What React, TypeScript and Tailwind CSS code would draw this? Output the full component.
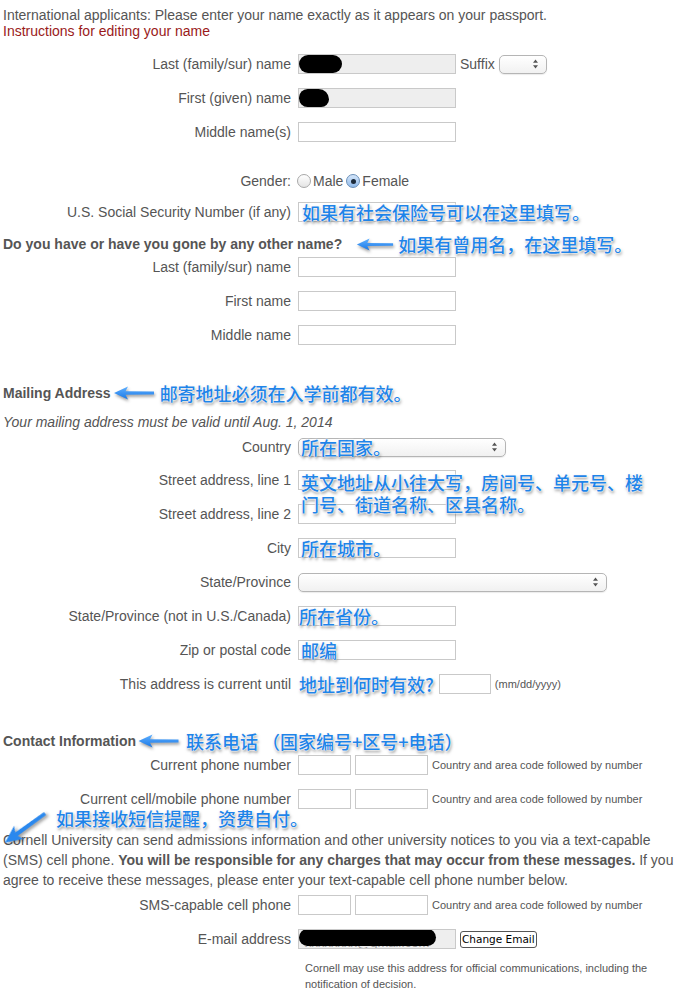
import React from 'react'
import { clsx } from 'clsx'

const glow =
  "font-['Noto_Sans_CJK_SC','Noto_Sans',sans-serif] font-medium text-[18px] leading-[22px] text-[#1f84e8] whitespace-nowrap [text-shadow:0_0_2px_#fff,0_0_2px_#fff,0_0_1px_#fff,1px_2px_3px_rgba(0,0,0,0.5)]"

function Arrow({ className }: { className?: string }) {
  return (
    <svg
      viewBox="0 0 42 16"
      className={clsx('[filter:drop-shadow(1px_2px_1.5px_rgba(0,0,0,0.4))]', className)}
    >
      <defs>
        <linearGradient id="ag" x1="0" y1="0" x2="0" y2="1">
          <stop offset="0" stopColor="#5fb0ff" />
          <stop offset="1" stopColor="#1a78e6" />
        </linearGradient>
      </defs>
      <path d="M1 8 L15 1.5 L12.5 6.3 L41 6.6 L41 9.4 L12.5 9.7 L15 14.5 Z" fill="url(#ag)" />
    </svg>
  )
}

function Row({ label, className, children }: { label: React.ReactNode; className?: string; children?: React.ReactNode }) {
  return (
    <div className={clsx('flex items-center h-[20px]', className)}>
      <div className="w-[288px] shrink-0 text-right whitespace-nowrap">{label}</div>
      <div className="ml-[7px] flex items-center">{children}</div>
    </div>
  )
}

function TextBox({ className, children }: { className?: string; children?: React.ReactNode }) {
  return (
    <div className={clsx('relative h-[20px] border border-[#c9c9c9] bg-white', className ?? 'w-[158px]')}>
      {children}
    </div>
  )
}

function Updown() {
  return (
    <svg width="7" height="11" viewBox="0 0 7 11" className="absolute right-[7px] top-1/2 -translate-y-1/2">
      <path d="M3.5 1 L6 4.2 L1 4.2 Z M3.5 10 L6 6.8 L1 6.8 Z" fill="#555" />
    </svg>
  )
}

function SelectBox({ className, children }: { className: string; children?: React.ReactNode }) {
  return (
    <div
      className={clsx(
        'relative h-[19px] rounded-[5px] border border-[#b5b5b5] bg-gradient-to-b from-white to-[#f1f1f1] shadow-[0_1px_1px_rgba(0,0,0,0.08)]',
        className
      )}
    >
      <Updown />
      {children}
    </div>
  )
}

function Radio({ checked }: { checked?: boolean }) {
  return checked ? (
    <div className="w-[14px] h-[14px] rounded-full border border-[#6a8fb8] bg-gradient-to-b from-[#d6e7fa] to-[#8fb9ea] flex items-center justify-center">
      <div className="w-[5px] h-[5px] rounded-full bg-[#1c2a3a]" />
    </div>
  ) : (
    <div className="w-[14px] h-[14px] rounded-full border border-[#a8a8a8] bg-gradient-to-b from-white to-[#e4e4e4]" />
  )
}

function Phone() {
  return (
    <>
      <TextBox className="w-[53px]" />
      <TextBox className="ml-[4px] w-[73px]" />
      <span className="ml-[4px] text-[11px] text-[#555] whitespace-nowrap">Country and area code followed by number</span>
    </>
  )
}

export default function App() {
  return (
    <div className="w-[675px] h-[994px] overflow-hidden bg-white pl-[3px] pt-[7px] font-['Liberation_Sans',Arial,sans-serif] text-[14px] text-[#555]">
      <div className="leading-4">International applicants: Please enter your name exactly as it appears on your passport.</div>
      <div className="leading-4 text-[#9a1a1a]">Instructions for editing your name</div>

      <Row label="Last (family/sur) name" className="mt-[15px]">
        <TextBox className="w-[158px] !bg-[#eeeeee]">
          <div className="absolute left-0 top-0 w-[43px] h-[18px] rounded-full bg-black" />
        </TextBox>
        <span className="ml-[4px]">Suffix</span>
        <SelectBox className="ml-[4px] w-[48px]" />
      </Row>
      <Row label="First (given) name" className="mt-[14px]">
        <TextBox className="w-[158px] !bg-[#eeeeee]">
          <div className="absolute left-0 top-0 w-[30px] h-[18px] rounded-[10px_12px_9px_10px] bg-black" />
        </TextBox>
      </Row>
      <Row label="Middle name(s)" className="mt-[14px]">
        <TextBox />
      </Row>

      <Row label="Gender:" className="mt-[29px]">
        <div className="-ml-[1px] flex items-center">
          <Radio />
          <span className="ml-[2px]">Male</span>
          <div className="ml-[3px]">
            <Radio checked />
          </div>
          <span className="ml-[2px]">Female</span>
        </div>
      </Row>
      <Row label="U.S. Social Security Number (if any)" className="mt-[11px]">
        <TextBox>
          <span className={clsx(glow, 'absolute left-[3px] top-1/2 -translate-y-1/2')}>如果有社会保险号可以在这里填写。</span>
        </TextBox>
      </Row>

      <div className="mt-[12px] h-[20px] flex items-center">
        <span className="font-bold whitespace-nowrap">Do you have or have you gone by any other name?</span>
        <Arrow className="ml-[14px] w-[38px] h-[15px]" />
        <span className={clsx(glow, 'ml-[4px]')}>如果有曾用名，在这里填写。</span>
      </div>
      <Row label="Last (family/sur) name" className="mt-[3px]">
        <TextBox />
      </Row>
      <Row label="First name" className="mt-[14px]">
        <TextBox />
      </Row>
      <Row label="Middle name" className="mt-[14px]">
        <TextBox />
      </Row>

      <div className="mt-[38px] h-[20px] flex items-center">
        <span className="font-bold whitespace-nowrap">Mailing Address</span>
        <Arrow className="ml-[1px] w-[44px] h-[16px]" />
        <span className={clsx(glow, 'ml-[4px]')}>邮寄地址必须在入学前都有效。</span>
      </div>
      <div className="mt-[9px] h-[20px] leading-5 italic">Your mailing address must be valid until Aug. 1, 2014</div>
      <Row label="Country" className="mt-[5px]">
        <SelectBox className="w-[208px]">
          <span className={clsx(glow, 'absolute left-[2px] top-1/2 -translate-y-1/2')}>所在国家。</span>
        </SelectBox>
      </Row>
      <Row label="Street address, line 1" className="mt-[13px]">
        <TextBox>
          <span className={clsx(glow, 'absolute left-[2px] top-0 z-10')}>
            英文地址从小往大写，房间号、单元号、楼
            <br />
            门号、街道名称、区县名称。
          </span>
        </TextBox>
      </Row>
      <Row label="Street address, line 2" className="mt-[14px]">
        <TextBox />
      </Row>
      <Row label="City" className="mt-[14px]">
        <TextBox>
          <span className={clsx(glow, 'absolute left-[2px] top-1/2 -translate-y-1/2')}>所在城市。</span>
        </TextBox>
      </Row>
      <Row label="State/Province" className="mt-[14px]">
        <SelectBox className="w-[309px]" />
      </Row>
      <Row label="State/Province (not in U.S./Canada)" className="mt-[14px]">
        <TextBox>
          <span className={clsx(glow, 'absolute left-0 top-1/2 -translate-y-1/2')}>所在省份。</span>
        </TextBox>
      </Row>
      <Row label="Zip or postal code" className="mt-[14px]">
        <TextBox>
          <span className={clsx(glow, 'absolute left-[2px] top-1/2 -translate-y-1/2')}>邮编</span>
        </TextBox>
      </Row>
      <Row label="This address is current until" className="mt-[14px]">
        <span className={clsx(glow, 'ml-[1px]')}>地址到何时有效?</span>
        <TextBox className="ml-[5px] w-[52px]" />
        <span className="ml-[4px] text-[11px] whitespace-nowrap">(mm/dd/yyyy)</span>
      </Row>

      <div className="mt-[37px] h-[20px] flex items-center">
        <span className="font-bold whitespace-nowrap">Contact Information</span>
        <Arrow className="ml-[1px] w-[43px] h-[16px]" />
        <span className={clsx(glow, 'ml-[6px]')}>联系电话 （国家编号+区号+电话）</span>
      </div>
      <Row label="Current phone number" className="mt-[4px]">
        <Phone />
      </Row>
      <Row label="Current cell/mobile phone number" className="mt-[14px]">
        <Phone />
      </Row>

      <div className="relative mt-[21px] leading-5 whitespace-nowrap">
        <svg viewBox="0 0 42 16" className="absolute left-[-4px] top-[-26px] w-[52px] h-[34px] overflow-visible">
          <g transform="translate(4 26) rotate(-36) translate(0 -8)">
            <path
              d="M1 8 L15 1.5 L12.5 6.3 L41 6.6 L41 9.4 L12.5 9.7 L15 14.5 Z"
              fill="#2a88ee"
              className="[filter:drop-shadow(1px_2px_1.5px_rgba(0,0,0,0.4))]"
            />
          </g>
        </svg>
        <span className={clsx(glow, 'absolute left-[53px] top-[-23px]')}>如果接收短信提醒，资费自付。</span>
        Cornell University can send admissions information and other university notices to you via a text-capable
        <br />
        (SMS) cell phone. <b>You will be responsible for any charges that may occur from these messages.</b> If you
        <br />
        agree to receive these messages, please enter your text-capable cell phone number below.
      </div>
      <Row label="SMS-capable cell phone" className="mt-[5px]">
        <Phone />
      </Row>
      <Row label="E-mail address" className="mt-[14px]">
        <TextBox className="w-[158px] !bg-[#eeeeee] overflow-hidden">
          <span className="absolute left-[6px] top-[3px] text-[13px] text-[#999]">xxxxxxxx@gmail.com</span>
          <div className="absolute left-0 top-[-1px] w-[137px] h-[17px] rounded-full bg-black" />
        </TextBox>
        <button className="ml-[4px] h-[17px] px-[1px] rounded-[3px] border border-[#555] bg-white font-['DejaVu_Sans',sans-serif] text-[10.5px] leading-[15px] text-black">
          Change Email
        </button>
      </Row>
      <div className="mt-[11px] ml-[302px] text-[11px] leading-4">
        Cornell may use this address for official communications, including the
        <br />
        notification of decision.
      </div>
    </div>
  )
}
